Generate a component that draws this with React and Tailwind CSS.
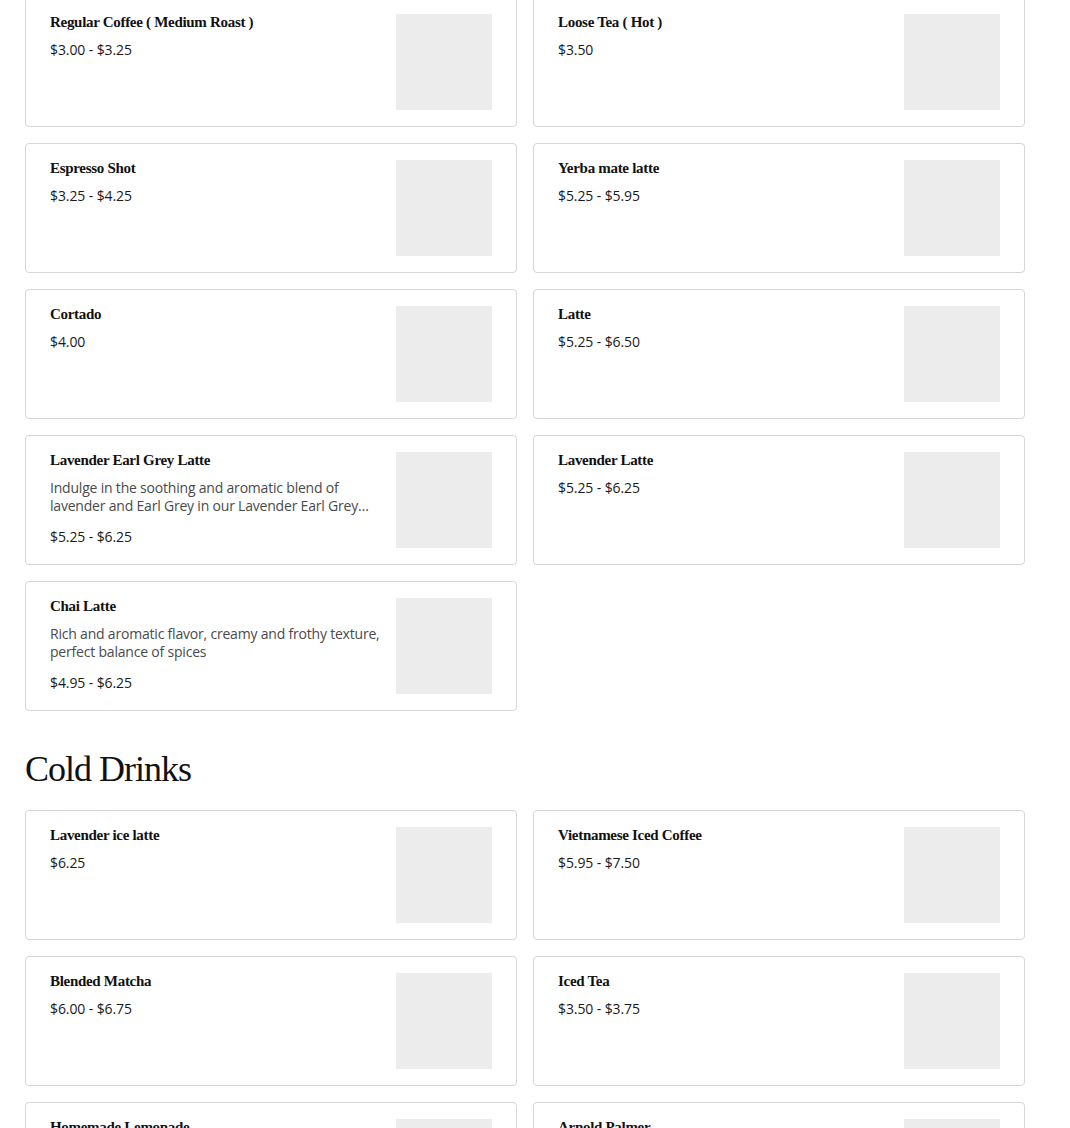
import React from "react";

const hot = [
  { name: "Regular Coffee ( Medium Roast )", price: "$3.00 - $3.25" },
  { name: "Loose Tea ( Hot )", price: "$3.50" },
  { name: "Espresso Shot", price: "$3.25 - $4.25" },
  { name: "Yerba mate latte", price: "$5.25 - $5.95" },
  { name: "Cortado", price: "$4.00" },
  { name: "Latte", price: "$5.25 - $6.50" },
  {
    name: "Lavender Earl Grey Latte",
    desc: "Indulge in the soothing and aromatic blend of lavender and Earl Grey in our Lavender Earl Grey Latte, a delightful tea-based drink.",
    price: "$5.25 - $6.25",
  },
  { name: "Lavender Latte", price: "$5.25 - $6.25" },
  {
    name: "Chai Latte",
    desc: "Rich and aromatic flavor, creamy and frothy texture, perfect balance of spices",
    price: "$4.95 - $6.25",
  },
];

const cold = [
  { name: "Lavender ice latte", price: "$6.25" },
  { name: "Vietnamese Iced Coffee", price: "$5.95 - $7.50" },
  { name: "Blended Matcha", price: "$6.00 - $6.75" },
  { name: "Iced Tea", price: "$3.50 - $3.75" },
  { name: "Homemade Lemonade", price: "$4.50" },
  { name: "Arnold Palmer", price: "$4.50" },
];

const serif = { fontFamily: '"Liberation Serif", "DejaVu Serif", serif' };
const sans = { fontFamily: '"Open Sans", "Noto Sans", sans-serif' };

function Card({ item }) {
  return (
    <div className="flex h-[130px] gap-4 rounded-[4px] border border-[#d6d6d6] bg-white px-6 py-4">
      <div className="flex min-w-0 flex-1 flex-col">
        <div
          className="text-[15px] font-bold leading-[16px] tracking-[-0.3px] text-[#111]"
          style={serif}
        >
          {item.name}
        </div>
        {item.desc && (
          <div
            className="mt-[11px] line-clamp-2 text-[14px] leading-[18px] tracking-[-0.2px] text-[#4a4a4a]"
            style={sans}
          >
            {item.desc}
          </div>
        )}
        <div
          className={
            item.desc
              ? "mt-[12px] text-[14px] leading-[20px] tracking-[-0.1px] text-[#1a1a1a]"
              : "mt-[10px] text-[14px] leading-[20px] tracking-[-0.1px] text-[#1a1a1a]"
          }
          style={sans}
        >
          {item.price}
        </div>
      </div>
      <div className="h-[96px] w-[96px] shrink-0 bg-[#ececec]" />
    </div>
  );
}

export default function App() {
  return (
    <div className="min-h-screen bg-white">
      <div className="-mt-[3px] ml-[25px] w-[1000px] pb-10">
        <div className="grid grid-cols-2 gap-4">
          {hot.map((it) => (
            <Card key={it.name} item={it} />
          ))}
        </div>
        <h2
          className="mb-[21px] mt-[38px] text-[36px] font-normal leading-[40px] tracking-[-1px] text-[#111]"
          style={serif}
        >
          Cold Drinks
        </h2>
        <div className="grid grid-cols-2 gap-4">
          {cold.map((it) => (
            <Card key={it.name} item={it} />
          ))}
        </div>
      </div>
    </div>
  );
}
